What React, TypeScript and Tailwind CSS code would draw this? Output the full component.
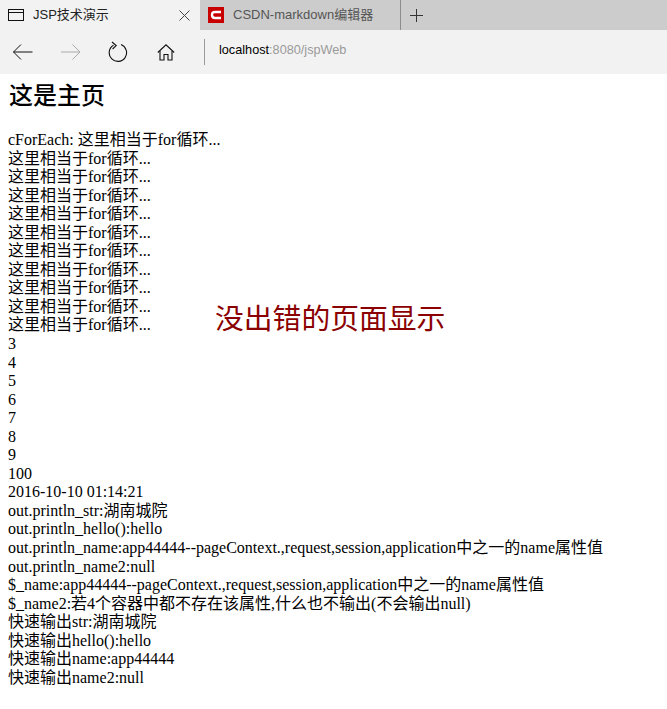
const loopLines = Array.from({ length: 10 }, () => "这里相当于for循环...");
const numbers = ["3", "4", "5", "6", "7", "8", "9", "100"];
const outLines = [
  "2016-10-10 01:14:21",
  "out.println_str:湖南城院",
  "out.println_hello():hello",
  "out.println_name:app44444--pageContext.,request,session,application中之一的name属性值",
  "out.println_name2:null",
  "$_name:app44444--pageContext.,request,session,application中之一的name属性值",
  "$_name2:若4个容器中都不存在该属性,什么也不输出(不会输出null)",
  "快速输出str:湖南城院",
  "快速输出hello():hello",
  "快速输出name:app44444",
  "快速输出name2:null",
];

function BrowserChrome() {
  return (
    <div className="font-['Liberation_Sans','Noto_Sans_CJK_SC',sans-serif]">
      <div className="flex h-[30px] bg-[#cccccc]">
        <div className="flex w-[200px] items-center bg-[#f2f2f2] pl-2 pr-[10px]">
          <svg width="16" height="13" viewBox="0 0 16 13" fill="none" stroke="#111" strokeWidth="1">
            <rect x="0.5" y="0.5" width="15" height="11" />
            <path d="M0.5 3.5H15.5" />
          </svg>
          <span className="ml-[9px] flex-1 text-[13px] text-[#222]">JSP技术演示</span>
          <svg width="11" height="11" viewBox="0 0 11 11" stroke="#444" strokeWidth="1">
            <path d="M0.5 0.5L10.5 10.5M10.5 0.5L0.5 10.5" />
          </svg>
        </div>
        <div className="flex w-[201px] items-center border-r border-[#8c8c8c] pl-2">
          <div className="flex h-4 w-4 items-center justify-center bg-[#c80000]">
            <svg width="12" height="10" viewBox="0 0 12 10" fill="none" stroke="#fff" strokeWidth="2.4">
              <path d="M11 2H5Q2 2 2 5T5 8H11" />
            </svg>
          </div>
          <span className="ml-[9px] text-[13px] text-[#555]">CSDN-markdown编辑器</span>
        </div>
        <div className="flex w-[30px] items-center justify-center">
          <svg width="13" height="13" viewBox="0 0 13 13" stroke="#333" strokeWidth="1">
            <path d="M6.5 0V13M0 6.5H13" />
          </svg>
        </div>
      </div>
      <div className="flex h-[44px] items-center bg-[#f2f2f2] pl-[13px]">
        <svg width="20" height="16" viewBox="0 0 20 16" fill="none" stroke="#111" strokeWidth="1">
          <path d="M0.5 8H19.5M8 0.5L0.5 8L8 15.5" />
        </svg>
        <svg className="ml-[28px]" width="20" height="16" viewBox="0 0 20 16" fill="none" stroke="#aaa" strokeWidth="1">
          <path d="M0 8H19M11.5 0.5L19 8L11.5 15.5" />
        </svg>
        <svg className="ml-[27px]" width="20" height="22" viewBox="0 0 20 22" fill="none" stroke="#111" strokeWidth="1.1">
          <path d="M5.5 4.2A8.7 8.7 0 1 0 13 3.6" />
          <path d="M4 1L8.2 4.6L4.6 8" />
        </svg>
        <svg className="ml-[29px]" width="18" height="17" viewBox="0 0 18 17" fill="none" stroke="#111" strokeWidth="1.1">
          <path d="M0.8 8.5L9 0.8L17.2 8.5" />
          <path d="M3 7V16H7V10.5H11V16H15V7" />
        </svg>
        <div className="ml-[29px] h-[26px] w-px bg-[#9a9a9a]" />
        <span className="ml-[14px] mb-[3px] text-[12.7px] text-black">
          localhost<span className="text-[#9a9a9a]">:8080/jspWeb</span>
        </span>
      </div>
    </div>
  );
}

export default function App() {
  return (
    <div className="relative min-h-[709px] bg-white">
      <BrowserChrome />
      <main className="px-2 font-['Liberation_Serif','Noto_Sans_CJK_SC',serif] text-base leading-[18.55px] text-black">
        <h2 className="pt-[8px] pl-px text-2xl leading-[28px] font-medium">这是主页</h2>
        <div className="mt-[21px]">
          <div>cForEach: 这里相当于for循环...</div>
          {loopLines.map((line, i) => (
            <div key={i}>{line}</div>
          ))}
          {numbers.map((n) => (
            <div key={n}>{n}</div>
          ))}
          {outLines.map((line, i) => (
            <div key={i}>{line}</div>
          ))}
        </div>
      </main>
      <div className="absolute top-[299px] left-[215px] font-['Noto_Sans_CJK_SC',serif] text-[28.8px] leading-[36px] text-[#8b0000]">
        没出错的页面显示
      </div>
    </div>
  );
}
